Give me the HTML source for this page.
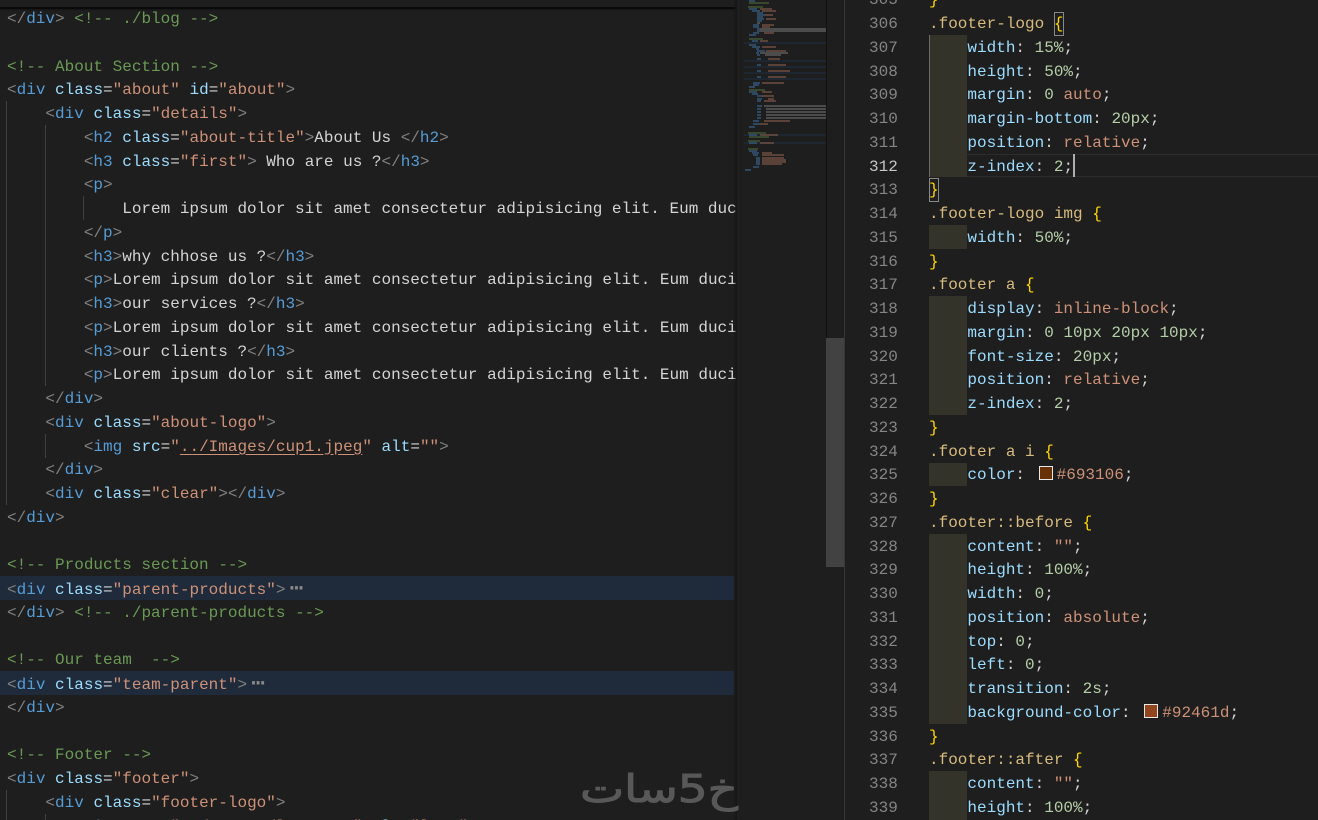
<!DOCTYPE html>
<html lang="en">
<head>
<meta charset="utf-8">
<title>Code editor</title>
<style>
html,body{margin:0;padding:0;background:#1e1e1e;}
body{width:1318px;height:820px;overflow:hidden;position:relative;font-family:"Liberation Mono",monospace;font-size:16px;color:#d4d4d4;}
.pane{position:absolute;top:0;height:820px;overflow:hidden;}
.code{position:absolute;white-space:normal;}
.code div{height:23.76px;line-height:23.76px;white-space:pre;}
.bx{position:absolute;}
i{font-style:normal;}
.a{color:#808080}.g{color:#569cd6}.h{color:#9cdcfe}.s{color:#ce9178}.c{color:#6a9955}
.l{color:#d7ba7d}.y{color:#ffd700}.n{color:#b5cea8}
.u{text-decoration:underline;text-underline-offset:3px}
.e{font-size:23px;line-height:1;margin-left:4px;vertical-align:-1px;color:#8a8a8a}
.sw{display:inline-block;width:12px;height:12px;border:1px solid #e8e8e8;margin:0 4px;vertical-align:-1px;}
</style>
</head>
<body>

<div class="pane" style="left:0;width:736px;">
  <div class="bx" style="left:0;top:576.36px;width:734px;height:23.76px;background:#1f2b3a"></div>
  <div class="bx" style="left:0;top:671.4px;width:734px;height:23.76px;background:#1f2b3a"></div>
  <div class="bx" style="left:6px;top:101.16px;width:1px;height:403.92px;background:#404040"></div>
  <div class="bx" style="left:45px;top:124.92px;width:1px;height:261.36px;background:#404040"></div>
  <div class="bx" style="left:83px;top:196.2px;width:1px;height:23.76px;background:#404040"></div>
  <div class="bx" style="left:45px;top:433.8px;width:1px;height:23.76px;background:#404040"></div>
  <div class="bx" style="left:6px;top:790.2px;width:1px;height:30px;background:#404040"></div>
  <div class="bx" style="left:45px;top:814px;width:1px;height:6px;background:#404040"></div>
  <div class="code" style="left:7px;top:-15.64px;">
<div><i class="g">}</i></div>
<div><i class="a">&lt;/</i><i class="g">div</i><i class="a">&gt;</i> <i class="c">&lt;!-- ./blog --&gt;</i></div>
<div> </div>
<div><i class="c">&lt;!-- About Section --&gt;</i></div>
<div><i class="a">&lt;</i><i class="g">div</i> <i class="h">class</i>=<i class="s">"about"</i> <i class="h">id</i>=<i class="s">"about"</i><i class="a">&gt;</i></div>
<div>    <i class="a">&lt;</i><i class="g">div</i> <i class="h">class</i>=<i class="s">"details"</i><i class="a">&gt;</i></div>
<div>        <i class="a">&lt;</i><i class="g">h2</i> <i class="h">class</i>=<i class="s">"about-title"</i><i class="a">&gt;</i>About Us <i class="a">&lt;/</i><i class="g">h2</i><i class="a">&gt;</i></div>
<div>        <i class="a">&lt;</i><i class="g">h3</i> <i class="h">class</i>=<i class="s">"first"</i><i class="a">&gt;</i> Who are us ?<i class="a">&lt;/</i><i class="g">h3</i><i class="a">&gt;</i></div>
<div>        <i class="a">&lt;</i><i class="g">p</i><i class="a">&gt;</i></div>
<div>            Lorem ipsum dolor sit amet consectetur adipisicing elit. Eum ducimus</div>
<div>        <i class="a">&lt;/</i><i class="g">p</i><i class="a">&gt;</i></div>
<div>        <i class="a">&lt;</i><i class="g">h3</i><i class="a">&gt;</i>why chhose us ?<i class="a">&lt;/</i><i class="g">h3</i><i class="a">&gt;</i></div>
<div>        <i class="a">&lt;</i><i class="g">p</i><i class="a">&gt;</i>Lorem ipsum dolor sit amet consectetur adipisicing elit. Eum ducimus</div>
<div>        <i class="a">&lt;</i><i class="g">h3</i><i class="a">&gt;</i>our services ?<i class="a">&lt;/</i><i class="g">h3</i><i class="a">&gt;</i></div>
<div>        <i class="a">&lt;</i><i class="g">p</i><i class="a">&gt;</i>Lorem ipsum dolor sit amet consectetur adipisicing elit. Eum ducimus</div>
<div>        <i class="a">&lt;</i><i class="g">h3</i><i class="a">&gt;</i>our clients ?<i class="a">&lt;/</i><i class="g">h3</i><i class="a">&gt;</i></div>
<div>        <i class="a">&lt;</i><i class="g">p</i><i class="a">&gt;</i>Lorem ipsum dolor sit amet consectetur adipisicing elit. Eum ducimus</div>
<div>    <i class="a">&lt;/</i><i class="g">div</i><i class="a">&gt;</i></div>
<div>    <i class="a">&lt;</i><i class="g">div</i> <i class="h">class</i>=<i class="s">"about-logo"</i><i class="a">&gt;</i></div>
<div>        <i class="a">&lt;</i><i class="g">img</i> <i class="h">src</i>=<i class="s">"<i class="u">../Images/cup1.jpeg</i>"</i> <i class="h">alt</i>=<i class="s">""</i><i class="a">&gt;</i></div>
<div>    <i class="a">&lt;/</i><i class="g">div</i><i class="a">&gt;</i></div>
<div>    <i class="a">&lt;</i><i class="g">div</i> <i class="h">class</i>=<i class="s">"clear"</i><i class="a">&gt;&lt;/</i><i class="g">div</i><i class="a">&gt;</i></div>
<div><i class="a">&lt;/</i><i class="g">div</i><i class="a">&gt;</i></div>
<div> </div>
<div><i class="c">&lt;!-- Products section --&gt;</i></div>
<div><i class="a">&lt;</i><i class="g">div</i> <i class="h">class</i>=<i class="s">"parent-products"</i><i class="a">&gt;</i><i class="e">⋯</i></div>
<div><i class="a">&lt;/</i><i class="g">div</i><i class="a">&gt;</i> <i class="c">&lt;!-- ./parent-products --&gt;</i></div>
<div> </div>
<div><i class="c">&lt;!-- Our team  --&gt;</i></div>
<div><i class="a">&lt;</i><i class="g">div</i> <i class="h">class</i>=<i class="s">"team-parent"</i><i class="a">&gt;</i><i class="e">⋯</i></div>
<div><i class="a">&lt;/</i><i class="g">div</i><i class="a">&gt;</i></div>
<div> </div>
<div><i class="c">&lt;!-- Footer --&gt;</i></div>
<div><i class="a">&lt;</i><i class="g">div</i> <i class="h">class</i>=<i class="s">"footer"</i><i class="a">&gt;</i></div>
<div>    <i class="a">&lt;</i><i class="g">div</i> <i class="h">class</i>=<i class="s">"footer-logo"</i><i class="a">&gt;</i></div>
<div>        <i class="a">&lt;</i><i class="g">img</i> <i class="h">src</i>=<i class="s">"../Images/logo.png"</i> <i class="h">alt</i>=<i class="s">"logo"</i><i class="a">&gt;</i></div>
  </div>
  <div class="bx" style="left:0;top:0;width:736px;height:7px;background:#1e1e1e"></div>
  <div class="bx" style="left:0;top:7px;width:736px;height:2px;background:#0a0a0a"></div>
  <div class="bx" style="left:0;top:9px;width:736px;height:2px;background:linear-gradient(#141414,rgba(30,30,30,0))"></div>
</div>

<div class="bx" style="left:733px;top:0;width:4px;height:820px;background:linear-gradient(90deg,rgba(30,30,30,0),#161616)"></div>

<svg class="bx" style="left:737px;top:0" width="90" height="180" viewBox="737 0 90 180" fill="none" stroke-width="1.4" opacity=".7">
  <g stroke="#1f2b3a" stroke-width="2"><path d="M744 43h82M744 61h82M744 67h82M744 73h82M744 79h82M744 135h82M744 143h82"/></g>
  <g stroke="#4f6f3f"><path d="M749 3h20M748 7h15M749 39h14M749 90h16M748 133h18M749 137h20M748 141h12M748 149h10"/></g>
  <g stroke="#3f6f9f"><path d="M749 1h6M749 9h8M752 11h8M757 13h6M757 15h8M757 17h6M757 19h7M757 21h5M753 25h6M753 27h6M757 29h3M757 31h3M753 33h6M749 35h7M752 41h6M749 45h7M752 47h8M756 49h3M757 51h8M756 53h3M757 55h3M757 59h4M757 65h4M757 71h4M757 77h4M753 83h7M753 85h6M749 87h6M749 92h8M752 94h6M757 96h5M757 99h5M757 101h4M757 106h5M757 109h4M757 112h4M757 115h4M757 118h4M753 121h6M753 124h7M749 127h6M749 135h8M749 143h8M749 151h8M752 153h7M753 155h5M756 158h4M756 160h4M756 162h4M756 164h4M753 167h6M745 170h6"/></g>
  <g stroke="#8f6450"><path d="M760 9h12M762 11h14M765 15h8M766 19h10M762 25h12M762 27h8M764 33h10M760 41h8M762 47h14M766 51h20M768 59h12M768 65h18M768 71h22M768 77h18M762 83h22M762 92h10M762 96h12M768 99h6M764 101h12M764 121h26M760 124h8M760 135h18M760 143h14M762 153h10M762 155h22M762 158h22M762 160h24M762 162h24M762 164h20"/></g>
  <g stroke="#777"><path d="M757 23h3M760 29h66M760 31h66M764 106h62M766 109h60M766 112h60M766 115h60M766 118h60M760 53h28M765 55h16"/></g>
</svg>

<div class="bx" style="left:826px;top:0;width:1px;height:338px;background:#111"></div>
<div class="bx" style="left:826px;top:338px;width:18px;height:229px;background:#424242"></div>
<div class="bx" style="left:844px;top:0;width:1px;height:820px;background:#383838"></div>

<div class="pane" style="left:845px;width:473px;">
  <div class="bx" style="left:85px;top:153.92px;width:388px;height:1px;background:#2c2c2c"></div>
  <div class="bx" style="left:85px;top:176.44px;width:388px;height:1px;background:#2c2c2c"></div>
  <div class="bx" style="left:84px;top:34.88px;width:38px;height:142.56px;background:#33332a;box-shadow:inset 1px 0 #6a6a66"></div>
  <div class="bx" style="left:84px;top:224.96px;width:38px;height:23.76px;background:#33332a"></div>
  <div class="bx" style="left:84px;top:296.24px;width:38px;height:118.8px;background:#33332a"></div>
  <div class="bx" style="left:84px;top:462.56px;width:38px;height:23.76px;background:#33332a"></div>
  <div class="bx" style="left:84px;top:533.84px;width:38px;height:190.08px;background:#33332a"></div>
  <div class="bx" style="left:84px;top:771.44px;width:38px;height:60px;background:#33332a"></div>
  <div class="bx" style="left:209px;top:12px;width:8px;height:22px;border:1px solid #888"></div>
  <div class="bx" style="left:84px;top:178px;width:8px;height:22px;border:1px solid #888"></div>
  <div class="bx" style="left:228px;top:154px;width:2px;height:23px;background:#aeafad"></div>
  <div class="code" style="left:24px;top:-10.64px;color:#858585;">
<div>305</div><div>306</div><div>307</div><div>308</div><div>309</div><div>310</div><div>311</div><div style="color:#c6c6c6">312</div><div>313</div><div>314</div><div>315</div><div>316</div><div>317</div><div>318</div><div>319</div><div>320</div><div>321</div><div>322</div><div>323</div><div>324</div><div>325</div><div>326</div><div>327</div><div>328</div><div>329</div><div>330</div><div>331</div><div>332</div><div>333</div><div>334</div><div>335</div><div>336</div><div>337</div><div>338</div><div>339</div>
  </div>
  <div class="code" style="left:84px;top:-10.64px;">
<div><i class="y">}</i></div>
<div><i class="l">.footer-logo</i> <i class="y">{</i></div>
<div>    <i class="h">width</i>: <i class="n">15%</i>;</div>
<div>    <i class="h">height</i>: <i class="n">50%</i>;</div>
<div>    <i class="h">margin</i>: <i class="n">0</i> <i class="s">auto</i>;</div>
<div>    <i class="h">margin-bottom</i>: <i class="n">20px</i>;</div>
<div>    <i class="h">position</i>: <i class="s">relative</i>;</div>
<div>    <i class="h">z-index</i>: <i class="n">2</i>;</div>
<div><i class="y">}</i></div>
<div><i class="l">.footer-logo img</i> <i class="y">{</i></div>
<div>    <i class="h">width</i>: <i class="n">50%</i>;</div>
<div><i class="y">}</i></div>
<div><i class="l">.footer a</i> <i class="y">{</i></div>
<div>    <i class="h">display</i>: <i class="s">inline-block</i>;</div>
<div>    <i class="h">margin</i>: <i class="n">0 10px 20px 10px</i>;</div>
<div>    <i class="h">font-size</i>: <i class="n">20px</i>;</div>
<div>    <i class="h">position</i>: <i class="s">relative</i>;</div>
<div>    <i class="h">z-index</i>: <i class="n">2</i>;</div>
<div><i class="y">}</i></div>
<div><i class="l">.footer a i</i> <i class="y">{</i></div>
<div>    <i class="h">color</i>: <i class="sw" style="background:#693106"></i><i class="s">#693106</i>;</div>
<div><i class="y">}</i></div>
<div><i class="l">.footer::before</i> <i class="y">{</i></div>
<div>    <i class="h">content</i>: <i class="s">""</i>;</div>
<div>    <i class="h">height</i>: <i class="n">100%</i>;</div>
<div>    <i class="h">width</i>: <i class="n">0</i>;</div>
<div>    <i class="h">position</i>: <i class="s">absolute</i>;</div>
<div>    <i class="h">top</i>: <i class="n">0</i>;</div>
<div>    <i class="h">left</i>: <i class="n">0</i>;</div>
<div>    <i class="h">transition</i>: <i class="n">2s</i>;</div>
<div>    <i class="h">background-color</i>: <i class="sw" style="background:#92461d"></i><i class="s">#92461d</i>;</div>
<div><i class="y">}</i></div>
<div><i class="l">.footer::after</i> <i class="y">{</i></div>
<div>    <i class="h">content</i>: <i class="s">""</i>;</div>
<div>    <i class="h">height</i>: <i class="n">100%</i>;</div>
  </div>
</div>

<svg class="bx" style="left:570px;top:755px" width="180" height="60" viewBox="0 0 180 60">
  <text x="168" y="47" text-anchor="start" direction="rtl" textLength="158" lengthAdjust="spacingAndGlyphs" fill="#585858" stroke="#585858" stroke-width="1" font-family="'DejaVu Sans',sans-serif" font-size="38">خ5سات</text>
</svg>

</body>
</html>
